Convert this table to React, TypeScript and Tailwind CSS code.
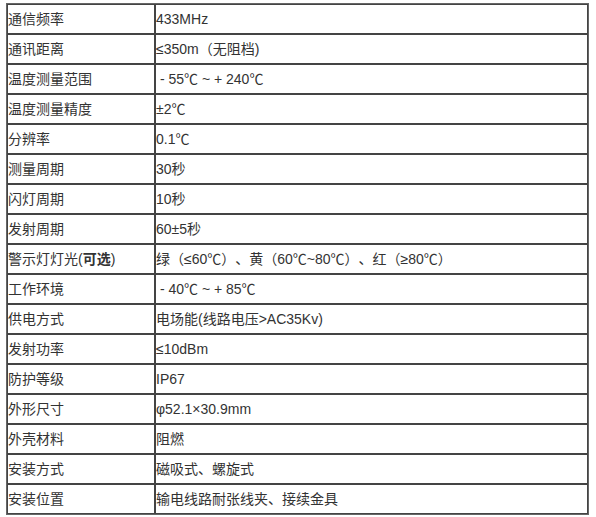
const rows: [string, string][] = [
  ['通信频率', '433MHz'],
  ['通讯距离', '≤350m（无阻档)'],
  ['温度测量范围', ' - 55℃ ~ + 240℃'],
  ['温度测量精度', '±2℃'],
  ['分辨率', '0.1℃'],
  ['测量周期', '30秒'],
  ['闪灯周期', '10秒'],
  ['发射周期', '60±5秒'],
  ['警示灯灯光(可选)', '绿（≤60℃）、黄（60℃~80℃）、红（≥80℃）'],
  ['工作环境', ' - 40℃ ~ + 85℃'],
  ['供电方式', '电场能(线路电压>AC35Kv)'],
  ['发射功率', '≤10dBm'],
  ['防护等级', 'IP67'],
  ['外形尺寸', 'φ52.1×30.9mm'],
  ['外壳材料', '阻燃'],
  ['安装方式', '磁吸式、螺旋式'],
  ['安装位置', '输电线路耐张线夹、接续金具'],
];

// wrap the degree sign so it takes the wide CJK glyph like the source page
function Value({ text }: { text: string }) {
  const parts = text.split('℃');
  return (
    <>
      {parts.map((p, i) => (
        <span key={i}>
          {p}
          {i < parts.length - 1 && (
            <span style={{ fontFamily: '"Noto Sans CJK SC", sans-serif' }}>℃</span>
          )}
        </span>
      ))}
    </>
  );
}

export default function App() {
  return (
    <div className="bg-white w-[596px] h-[517px] pt-[3px] pl-[6px]">
      <table
        className="border-separate border-spacing-0 w-[583px] border border-[#666] text-[14px] text-[#333] [text-spacing-trim:space-all]"
        style={{ fontFamily: '"Liberation Sans", "Noto Sans CJK SC", sans-serif' }}
      >
        <tbody>
          {rows.map(([label, value], i) => (
            <tr key={i}>
              <td className="h-[30px] w-[148px] border border-[#444] p-0 align-middle whitespace-pre">
                {label === '警示灯灯光(可选)' ? (
                  <>
                    警示灯灯光(<b className="font-bold">可选</b>)
                  </>
                ) : (
                  label
                )}
              </td>
              <td className="h-[30px] border border-[#444] p-0 align-middle whitespace-pre">
                <Value text={value} />
              </td>
            </tr>
          ))}
        </tbody>
      </table>
    </div>
  );
}
